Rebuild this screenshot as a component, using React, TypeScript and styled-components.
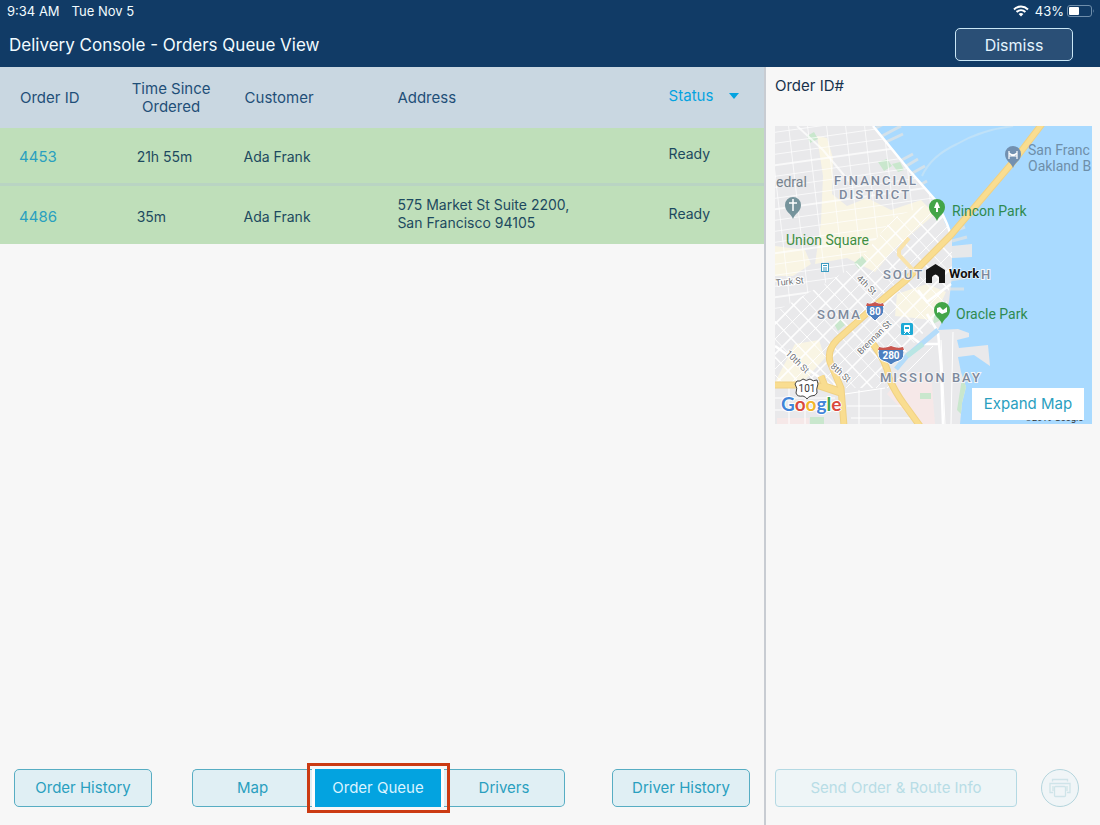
import React from "react";
import styled, { createGlobalStyle, css } from "styled-components";

const colors = {
  navy: "#113b66",
  text: "#1d4a5f",
  heading: "#1f4f78",
  accent: "#2a9fbf",
  bright: "#03a3e0",
  page: "#f7f7f7",
  head: "#c9d7e1",
  ready: "#bfdfba",
};

const GlobalStyle = createGlobalStyle`
  *, *::before, *::after { box-sizing: border-box; }
  body {
    margin: 0;
    background: ${colors.page};
    color: ${colors.text};
    font-family: Inter, "Liberation Sans", sans-serif;
    font-size: 14px;
    line-height: 18px;
  }
  button { font: inherit; cursor: pointer; }
`;

const Page = styled.div`
  display: flex;
  flex-direction: column;
  min-height: 100vh;
`;

const TopBar = styled.header`
  background: ${colors.navy};
  color: #f2fbff;
`;

const StatusBar = styled.div`
  display: flex;
  align-items: center;
  justify-content: space-between;
  height: 22px;
  padding: 0 5px 0 7px;
  font-size: 13px;
`;

const StatusGroup = styled.div<{ $gap: number }>`
  display: flex;
  align-items: center;
  gap: ${(p) => p.$gap}px;
`;

const TitleRow = styled.div`
  display: flex;
  align-items: center;
  justify-content: space-between;
  height: 45px;
  padding: 0 27px 0 9px;
`;

const Title = styled.h1`
  margin: 0;
  font-size: 17px;
  font-weight: 400;
  line-height: 20px;
`;

const DismissButton = styled.button`
  width: 118px;
  height: 33px;
  border: 1px solid #c9e6f5;
  border-radius: 5px;
  background: #2a4f76;
  color: #e4f5ff;
  font-size: 16px;
`;

const Body = styled.div`
  flex: 1;
  display: grid;
  grid-template-columns: minmax(0, 1fr) 334px;
`;

const QueuePanel = styled.main`
  display: flex;
  flex-direction: column;
  border-right: 2px solid #c8ccd2;
`;

const OrdersTable = styled.table`
  width: 100%;
  table-layout: fixed;
  border-collapse: separate;
  border-spacing: 0;
`;

const HeadCell = styled.th<{ $width: string; $center?: boolean; $active?: boolean }>`
  width: ${(p) => p.$width};
  height: 61px;
  padding: 0 0 0 20px;
  background: ${colors.head};
  color: ${(p) => (p.$active ? colors.bright : colors.heading)};
  font-size: 15px;
  font-weight: 400;
  text-align: left;
  ${(p) => p.$center && css`
    padding: 0;
    text-align: center;
  `}
`;

const SortButton = styled.button`
  display: flex;
  align-items: center;
  gap: 16px;
  padding: 0 0 4px;
  border: 0;
  background: none;
  color: inherit;
`;

const Row = styled.tr`
  background: ${colors.ready};
  &:not(:last-child) td { border-bottom: 3px solid #b9d4c3; }
`;

const Cell = styled.td<{ $raised?: boolean }>`
  height: 58px;
  padding: ${(p) => (p.$raised ? "0 0 3px 20px" : "3px 0 0 19px")};
`;

const OrderLink = styled.a`
  color: ${colors.accent};
  font-size: 15px;
  text-decoration: none;
`;

const Footer = styled.footer`
  display: flex;
  margin-top: auto;
  padding: 0 14px 18px;
`;

const outline = css`
  height: 38px;
  border: 1px solid #57adc3;
  background: #e0eff4;
  color: ${colors.accent};
  font-size: 15px;
`;

const ActionButton = styled.button`
  ${outline}
  width: 138px;
  padding: 0;
  border-radius: 5px;
`;

const Segments = styled.nav`
  display: flex;
  width: 373px;
  margin: 0 auto 0 40px;
`;

const Segment = styled.button<{ $side: "left" | "right" }>`
  ${outline}
  flex: ${(p) => (p.$side === "left" ? "0 0 120px" : "1")};
  border-radius: ${(p) => (p.$side === "left" ? "5px 0 0 5px" : "0 5px 5px 0")};
  border-${(p) => (p.$side === "left" ? "right" : "left")}-width: 0;
`;

const ActiveSegment = styled.div`
  position: relative;
  width: 132px;
  padding: 0 3px;
  background: #fdfdfd;
`;

const ActiveButton = styled.button`
  width: 100%;
  height: 38px;
  padding: 0;
  border: 0;
  background: ${colors.bright};
  color: #d9f3ff;
  font-size: 15px;
`;

const Highlight = styled.span`
  position: absolute;
  inset: -6px -6px -6px -5px;
  border: 3px solid #cb3a12;
  pointer-events: none;
`;

const DetailPanel = styled.aside`
  display: flex;
  flex-direction: column;
  padding: 10px 8px 18px 9px;
`;

const DetailTitle = styled.h2`
  margin: 0 0 31px;
  color: #17324d;
  font-size: 15px;
  font-weight: 400;
  line-height: 18px;
`;

const MapFrame = styled.div`
  position: relative;
  height: 298px;
  overflow: hidden;
`;

const MapSvg = styled.svg`
  display: block;
  width: 100%;
  height: 100%;
`;

const ExpandButton = styled.button`
  position: absolute;
  right: 8px;
  bottom: 4px;
  width: 112px;
  height: 32px;
  padding: 0;
  border: 0;
  background: #ffffff;
  color: ${colors.accent};
  font-size: 15px;
`;

const DetailActions = styled.div`
  display: flex;
  align-items: center;
  justify-content: space-between;
  margin-top: auto;
  padding-right: 13px;
`;

const SendButton = styled.button`
  width: 242px;
  height: 38px;
  padding: 0;
  border: 1px solid #b4d9e3;
  border-radius: 4px;
  background: #eef5f7;
  color: #b8dde6;
  font-size: 15px;
`;

const PrintButton = styled.button`
  display: grid;
  place-items: center;
  width: 38px;
  height: 38px;
  padding: 0;
  border: 1px solid #b4d5dd;
  border-radius: 50%;
  background: #f0f5f7;
  color: #cfe4e9;
`;

const WifiIcon = () => (
  <svg width="16" height="12" viewBox="0 0 16 12" fill="none" stroke="#fff" strokeWidth="2" aria-hidden="true">
    <path d="M1 4.4C5 .6 11 .6 15 4.4" />
    <path d="M3.6 7C6.2 4.6 9.8 4.6 12.4 7" />
    <path d="M5.6 8.9Q8 6.9 10.4 8.9L8 11.5Z" fill="#fff" stroke="none" />
  </svg>
);

const BatteryIcon = () => (
  <svg width="28" height="12" viewBox="0 0 28 12" aria-hidden="true">
    <rect x=".5" y=".5" width="24" height="11" rx="2.5" fill="none" stroke="#6f8eab" />
    <rect x="2" y="2" width="10" height="8" rx="1" fill="#fff" />
    <path d="M26 4q1.6 2 0 4Z" fill="#6f8eab" />
  </svg>
);

const PrinterIcon = () => (
  <svg width="24" height="22" viewBox="0 0 24 22" fill="none" stroke="currentColor" strokeWidth="1.3" aria-hidden="true">
    <path d="M4.500 4.500V2.500H19.500V4.500M5 15.500H2V6.500H22V15.500H19M5 9V14M19 9V14" />
    <rect x="6.500" y="9.500" width="11" height="10" rx="1" />
  </svg>
);

const range = (n: number) => Array.from({ length: n }, (_, i) => i);

const land =
  "M0 0H98L134 44L161 75L170 97L177 111V149L174 176L167 196L163 204L183 203L194 207V211L182 214L184 222L213 219L215 240L199 229L183 231L186 246L191 261L187 277L185 298H0Z";

const freeways =
  "M267-2L238 36L176 109L131 154L101 179L62 214Q52 224 55 236L66 262L69 300M0 259H41L68 268M98 218Q112 236 114 252Q120 266 129 278L145 300M46 250L50 260L68 266";

const Pin = ({ x, y, fill, children }: { x: number; y: number; fill: string; children: React.ReactNode }) => (
  <g transform={`translate(${x} ${y})`}>
    <path d="M0 13C-2 7-8 6-8-1A8 8 0 0 1 8-1C8 6 2 7 0 13Z" fill={fill} />
    {children}
  </g>
);

const InterstateShield = ({ x, y, w, label }: { x: number; y: number; w: number; label: string }) => (
  <g transform={`translate(${x} ${y})`}>
    <path
      d={`M${-w + 1}-8Q${-w / 2}-6 0-9Q${w / 2}-6 ${w - 1}-8Q${w + 2} 4 ${w - 5} 6Q3 7 0 10Q-3 7 ${5 - w} 6Q${-w - 2} 4 ${1 - w}-8Z`}
      fill="#4d7fc0"
      stroke="#fff"
      strokeWidth="1"
    />
    <path d={`M${1 - w}-8Q${-w / 2}-6 0-9Q${w / 2}-6 ${w - 1}-8L${w}-5H${-w}Z`} fill="#c9564e" />
    <text y="4" fill="#fff" fontSize="10" fontWeight="700" textAnchor="middle">{label}</text>
  </g>
);

const CityMap = () => (
  <MapSvg viewBox="0 0 317 298" preserveAspectRatio="xMidYMid slice" role="img" aria-label="Map of San Francisco" fontFamily="Roboto, sans-serif">
    <defs>
      <clipPath id="land"><path d={land} /></clipPath>
      <clipPath id="north"><path d="M0 0H98L161 75L118 92L80 140L0 186Z" /></clipPath>
      <clipPath id="south"><path d="M161 75L177 111V149L170 185L150 205L118 241L108 262L70 262L0 255V186L80 140L118 92Z" /></clipPath>
    </defs>
    <rect width="317" height="298" fill="#a9daff" />
    <path d="M101 2L116-6M107 10L126 0M111 16L128 8M123 36L138 28M128 42L143 33M134 49L150 40M143 60L152 55M176 106L190 101M177 115L192 111M175 154L194 151M175 163L189 163" stroke="#d3e1ea" strokeWidth="3" fill="none" />
    <path d="M177 120L197 118V131L177 132Z" fill="#e6e8ea" />
    <path d="M147 50Q156 30 182 18Q206 4 238 0" stroke="#bfe1f8" strokeWidth="2" fill="none" />
    <path d={land} fill="#e9e9eb" />
    <g clipPath="url(#land)">
      <path d="M42 10L52 12L58 32L57 68L72 80L92 72L116 84L146 74L160 88L120 122L100 146L72 132L40 138L46 96L48 50ZM0 120L30 124L36 138L18 150H0ZM122 168L152 158L171 166L158 194L120 190ZM20 218L44 214L50 232L28 256H0Z" fill="#f9f5e4" />
      <path d="M112 268L130 246L156 246L160 298H142ZM2 292H34V298H2Z" fill="#f6e8e8" />
      <path d="M32 10l7-4 4 7-8 4ZM103 36l9-3 5 7-8 5ZM117 38l8-2 4 8-6 2ZM79 137l8-7 5 6-7 8ZM59 198l6-5 5 6-7 6ZM35 291h14v7H35ZM145 267h11v6h-11ZM187 252l6 10-7 26-4-4ZM160 184l8-2-2 12-8 4Z" fill="#c9e7cd" />
      <g stroke="#fff" fill="none">
        <path d="M70 268L110 262M72 280H128M76 292H140M84 264V298M106 262V298M0 272H60M0 284H62M14 262V298M30 262V298M166 214L170 298M178 206L176 298M112 262L134 244L158 220" strokeWidth="1" />
      </g>
    </g>
    <g clipPath="url(#north)" stroke="#fff" strokeOpacity=".7" fill="none">
      {range(20).map((i) => (
        <path key={`h${i}`} d={`M-5 ${i * 11 - 4}L165 ${i * 11 - 28}`} strokeWidth={i % 4 ? 1 : 2} />
      ))}
      {range(10).map((i) => (
        <path key={`v${i}`} d={`M${i * 19 - 25} -5L${i * 19 + 1} 220`} strokeWidth="1" />
      ))}
      <path d="M22 0L48 24L78 60" strokeWidth="2" />
    </g>
    <g clipPath="url(#south)" stroke="#fff" strokeOpacity=".9" fill="none">
      {range(20).map((i) => (
        <path key={`a${i}`} d={`M${i * 17 - 185} 90L${i * 17 + 5} 290`} strokeWidth={i % 2 ? 1.5 : 1} />
      ))}
      {range(24).map((i) => (
        <path key={`b${i}`} d={`M${i * 15 - 20} 68L${i * 15 - 220} 268`} strokeWidth={i % 2 ? 1 : 1.6} />
      ))}
    </g>
    <path d="M98 0L134 44L162 76L172 98L177 112M152 188L163 206L166 240L168 298M130 206L146 218H164M143 164L152 176L176 158M0 220L68 268" stroke="#fff" strokeWidth="2.500" fill="none" />
    <path d="M121 243L132 230L163 204" stroke="#b4dcfa" strokeWidth="5" fill="none" />
    <path d="M132 230L148 218" stroke="#b9e6e4" strokeWidth="5" fill="none" />
    <g fill="none" strokeLinejoin="round">
      <path d={freeways} stroke="#f0d184" strokeWidth="7" />
      <path d={freeways} stroke="#f9dd90" strokeWidth="5" />
      <path d="M138 144L124 129V124L134 112" stroke="#f9e3ab" strokeWidth="4" />
    </g>

    <g fill="#7d899c" fontSize="13" fontWeight="500" letterSpacing="2" stroke="#f4f5f6" strokeWidth="2" paintOrder="stroke">
      <text x="59" y="59">FINANCIAL</text>
      <text x="64" y="73">DISTRICT</text>
      <text x="108" y="153">SOUT</text>
      <text x="206" y="153">H</text>
      <text x="42" y="193">SOMA</text>
      <text x="105" y="256">MISSION BAY</text>
    </g>
    <g fontSize="14">
      <text x="1" y="61" fill="#77838e">edral</text>
      <text x="11" y="119" fill="#3f8f43">Union Square</text>
      <text x="253" y="29" fill="#6e8faa">San Franc</text>
      <text x="253" y="45" fill="#6e8faa">Oakland B</text>
      <text x="177" y="90" fill="#2f8a50">Rincon Park</text>
      <text x="181" y="193" fill="#2f8a50">Oracle Park</text>
    </g>
    <g fill="#6f7276" fontSize="9" stroke="#fff" strokeWidth="2" paintOrder="stroke">
      <text transform="translate(1 160) rotate(-6)">Turk St</text>
      <text transform="translate(81 153) rotate(44)">4th St</text>
      <text transform="translate(10 228) rotate(44)">10th St</text>
      <text transform="translate(55 241) rotate(42)">8th St</text>
      <text transform="translate(86 229) rotate(-45)">Brennan St</text>
    </g>

    <Pin x={18} y={80} fill="#76949c"><path d="M0-7V5M-4-3H4" stroke="#fff" strokeWidth="1.500" /></Pin>
    <Pin x={238} y={29} fill="#7290b0"><path d="M-4 4V-4M4 4V-4M-4 1H4M-4-2Q0 2 4-2" stroke="#fff" strokeWidth="1.200" fill="none" /></Pin>
    <Pin x={162} y={82} fill="#43a548"><path d="M-1-5Q0-7 1-5L3 0H1V4H-1V0H-3Z" fill="#fff" /></Pin>
    <Pin x={167} y={185} fill="#43a548"><path d="M-5 2V-3L-2-4L1-1L5-4V1L0 3L-3 1Z" fill="#fff" /></Pin>
    <g transform="translate(46 137)">
      <rect x=".5" y=".5" width="7" height="8" fill="#fff" stroke="#3c9cc0" />
      <path d="M2 5h4M2 2.500h4M2 7h4" stroke="#3c9cc0" />
    </g>
    <g transform="translate(126 197)">
      <rect width="12" height="12" rx="1.500" fill="#1daad6" />
      <rect x="3" y="2" width="6" height="7" rx="1" fill="#fff" />
      <path d="M4 4h4v2H4Z" fill="#1daad6" />
      <path d="M3 11l2-2M9 11L7 9" stroke="#fff" />
    </g>
    <InterstateShield x={100} y={185} w={9} label="80" />
    <InterstateShield x={116} y={229} w={13} label="280" />
    <path d="M22 255Q25 256 28 253Q31 256 35 253Q38 256 42 254L43 258Q41 263 42 267Q41 270 36 270Q33 271 32 273Q31 271 28 270Q22 271 21 267Q23 262 20 258Z" fill="#fff" stroke="#444" />
    <text x="32" y="266" fill="#333" fontSize="10" textAnchor="middle">101</text>
    <path d="M151 157V144L160.500 138L170 144V157H164V151Q160.500 146 157 151V157Z" fill="#161616" />
    <text x="174" y="152" fill="#111" fontSize="13" fontWeight="700" stroke="#fff" strokeWidth="1" paintOrder="stroke">Work</text>
    <text x="6" y="285" fontFamily="Lato, sans-serif" fontSize="19" fontWeight="700" stroke="#fff" strokeWidth="2" paintOrder="stroke">
      <tspan fill="#4285d8">G</tspan><tspan fill="#d94a3d">o</tspan><tspan fill="#f2b52b">o</tspan><tspan fill="#4285d8">g</tspan><tspan fill="#3fa553">l</tspan><tspan fill="#d94a3d">e</tspan>
    </text>
    <text x="250" y="295" fill="#333" fontSize="9">©2019 Google</text>
  </MapSvg>
);

const orders = [
  { id: "4453", time: "21h 55m", customer: "Ada Frank", address: [] as string[], status: "Ready" },
  { id: "4486", time: "35m", customer: "Ada Frank", address: ["575 Market St Suite 2200,", "San Francisco 94105"], status: "Ready" },
];

export default function App() {
  return (
    <Page>
      <GlobalStyle />
      <TopBar>
        <StatusBar>
          <StatusGroup $gap={12}>
            <span>9:34 AM</span>
            <span>Tue Nov 5</span>
          </StatusGroup>
          <StatusGroup $gap={6}>
            <WifiIcon />
            <StatusGroup $gap={3}>
              <span>43%</span>
              <BatteryIcon />
            </StatusGroup>
          </StatusGroup>
        </StatusBar>
        <TitleRow>
          <Title>Delivery Console - Orders Queue View</Title>
          <DismissButton type="button">Dismiss</DismissButton>
        </TitleRow>
      </TopBar>
      <Body>
        <QueuePanel>
          <OrdersTable>
            <thead>
              <tr>
                <HeadCell $width="15.4%">Order ID</HeadCell>
                <HeadCell $width="14%" $center>Time Since<br />Ordered</HeadCell>
                <HeadCell $width="20%">Customer</HeadCell>
                <HeadCell $width="35.5%">Address</HeadCell>
                <HeadCell $width="15.1%" $active>
                  <SortButton type="button">
                    Status
                    <svg width="10" height="6" viewBox="0 0 10 6" aria-hidden="true">
                      <path d="M0 0H10L5 6Z" fill={colors.bright} />
                    </svg>
                  </SortButton>
                </HeadCell>
              </tr>
            </thead>
            <tbody>
              {orders.map((o) => (
                <Row key={o.id}>
                  <Cell><OrderLink href="#">{o.id}</OrderLink></Cell>
                  <Cell>{o.time}</Cell>
                  <Cell>{o.customer}</Cell>
                  <Cell $raised>{o.address.map((line) => <div key={line}>{line}</div>)}</Cell>
                  <Cell $raised>{o.status}</Cell>
                </Row>
              ))}
            </tbody>
          </OrdersTable>
          <Footer>
            <ActionButton type="button">Order History</ActionButton>
            <Segments>
              <Segment type="button" $side="left">Map</Segment>
              <ActiveSegment>
                <ActiveButton type="button">Order Queue</ActiveButton>
                <Highlight />
              </ActiveSegment>
              <Segment type="button" $side="right">Drivers</Segment>
            </Segments>
            <ActionButton type="button">Driver History</ActionButton>
          </Footer>
        </QueuePanel>
        <DetailPanel>
          <DetailTitle>Order ID#</DetailTitle>
          <MapFrame>
            <CityMap />
            <ExpandButton type="button">Expand Map</ExpandButton>
          </MapFrame>
          <DetailActions>
            <SendButton type="button">Send Order &amp; Route Info</SendButton>
            <PrintButton type="button" aria-label="Print"><PrinterIcon /></PrintButton>
          </DetailActions>
        </DetailPanel>
      </Body>
    </Page>
  );
}
